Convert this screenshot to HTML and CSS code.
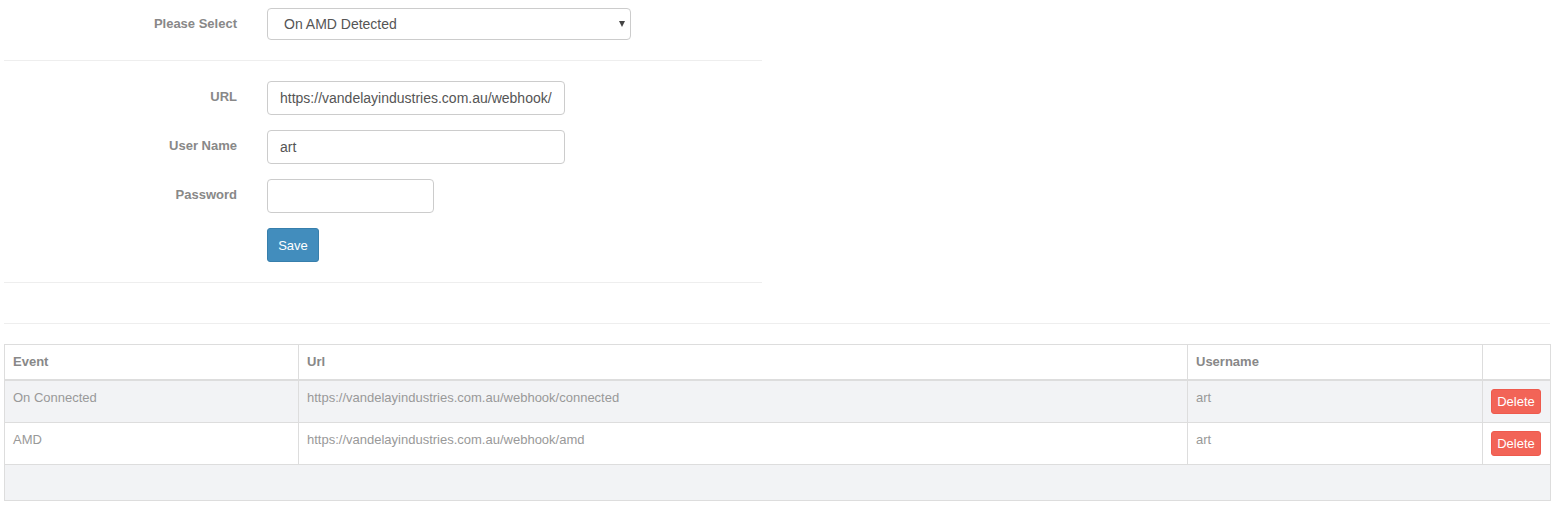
FILE: index.html
```html
<!DOCTYPE html>
<html>
<head>
<meta charset="utf-8">
<link rel="stylesheet" href="styles.css">
</head>
<body>
<div class="page">
  <div class="form-block">
    <div class="section section-select">
      <div class="form-row">
        <label class="label">Please Select</label>
        <div class="select-wrap">
          <select class="select"><option>On AMD Detected</option></select>
        </div>
      </div>
    </div>
    <div class="section section-fields">
      <div class="form-row">
        <label class="label">URL</label>
        <input class="input input-url" type="text" value="https://vandelayindustries.com.au/webhook/">
      </div>
      <div class="form-row">
        <label class="label">User Name</label>
        <input class="input input-url" type="text" value="art">
      </div>
      <div class="form-row">
        <label class="label">Password</label>
        <input class="input input-pass" type="password" value="">
      </div>
      <div class="form-row">
        <span class="label"></span>
        <button class="btn btn-save">Save</button>
      </div>
    </div>
  </div>
  <div class="rule"></div>
  <table class="grid">
    <colgroup>
      <col class="c1"><col class="c2"><col class="c3"><col class="c4">
    </colgroup>
    <thead>
      <tr><th>Event</th><th>Url</th><th>Username</th><th></th></tr>
    </thead>
    <tbody>
      <tr class="odd">
        <td>On Connected</td>
        <td>https://vandelayindustries.com.au/webhook/connected</td>
        <td>art</td>
        <td><button class="btn btn-del">Delete</button></td>
      </tr>
      <tr>
        <td>AMD</td>
        <td>https://vandelayindustries.com.au/webhook/amd</td>
        <td>art</td>
        <td><button class="btn btn-del">Delete</button></td>
      </tr>
    </tbody>
    <tfoot>
      <tr><td colspan="4"></td></tr>
    </tfoot>
  </table>
</div>
</body>
</html>
```

FILE: styles.css
```css
* { box-sizing: border-box; }
html, body { margin: 0; padding: 0; background: #fff; }
body {
  font-family: "Liberation Sans", Arial, sans-serif;
  font-size: 13px;
  color: #333;
}
.page { padding: 0 4px; }
.form-block { width: 758px; }
.section { border-bottom: 1px solid #eee; }
.section-select { padding: 8px 0 20px; }
.section-fields {
  padding: 20px 0 20px;
  display: flex;
  flex-direction: column;
  gap: 15px;
}
.form-row {
  display: grid;
  grid-template-columns: 233px auto;
  column-gap: 30px;
  align-items: start;
  justify-items: start;
}
.label {
  justify-self: end;
  font-weight: bold;
  font-size: 13px;
  color: #888;
  line-height: 18px;
  padding-top: 7px;
}
.section-select .label { padding-top: 7px; }
.select-wrap { position: relative; width: 364px; }
.select-wrap::after {
  content: "";
  position: absolute;
  right: 6px;
  top: 13px;
  border-left: 3px solid transparent;
  border-right: 3px solid transparent;
  border-top: 6px solid #444;
}
.select {
  -webkit-appearance: none;
  appearance: none;
  width: 364px;
  height: 32px;
  border: 1px solid #ccc;
  border-radius: 4px;
  background: #fff;
  padding: 0 16px;
  font-family: "Liberation Sans", Arial, sans-serif;
  font-size: 14px;
  color: #555;
  outline: none;
}
.input {
  height: 34px;
  border: 1px solid #ccc;
  border-radius: 4px;
  background: #fff;
  padding: 0 12px;
  font-family: "Liberation Sans", Arial, sans-serif;
  font-size: 14px;
  color: #555;
  outline: none;
}
.input-url { width: 298px; }
.input-pass { width: 167px; }
.btn {
  font-family: "Liberation Sans", Arial, sans-serif;
  border-radius: 3px;
  color: #fff;
  cursor: pointer;
}
.btn-save {
  width: 52px;
  height: 34px;
  font-size: 13px;
  background: #428dbd;
  border: 1px solid #377fac;
  padding: 0;
}
.rule {
  height: 41px;
  border-bottom: 1px solid #eee;
  margin-bottom: 20px;
}
.grid {
  width: 1546px;
  border-collapse: collapse;
  table-layout: fixed;
  border: 1px solid #ddd;
  color: #999;
  font-size: 13px;
}
.c1 { width: 294px; }
.c2 { width: 889px; }
.c3 { width: 295px; }
.c4 { width: 68px; }
.grid th, .grid td {
  border: 1px solid #ddd;
  padding: 8px 8px;
  line-height: 18px;
  text-align: left;
  vertical-align: top;
}
.grid th {
  font-weight: bold;
  color: #888;
  border-bottom: 2px solid #ddd;
}
.grid tbody tr.odd td { background: #f2f3f5; }
.grid tbody td { height: 42px; }
.grid tfoot td { background: #f2f3f5; height: 36px; }
.grid td:last-child { padding-top: 8px; }
.btn-del {
  width: 50px;
  height: 25px;
  padding: 0;
  font-size: 13px;
  background: #f26457;
  border: 1px solid #ee5a4d;
}
```
